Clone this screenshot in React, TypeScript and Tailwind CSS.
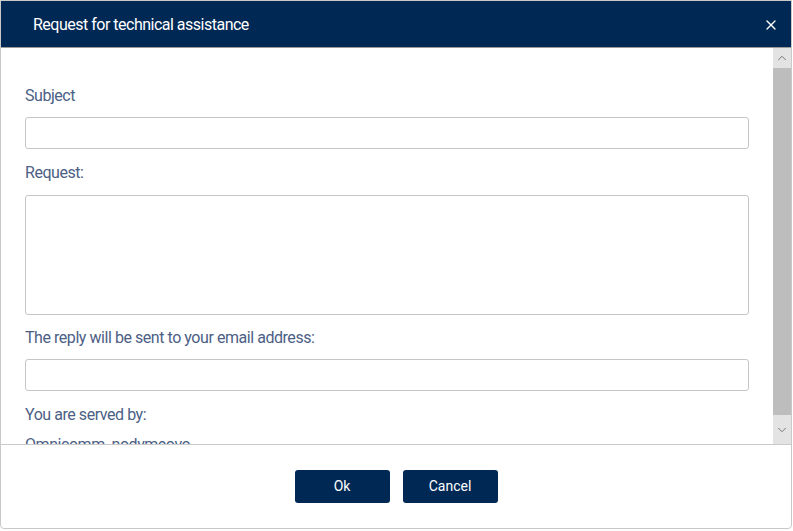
import { ChevronDown, ChevronUp, X } from 'lucide-react';

const font = { fontFamily: 'Roboto, "Liberation Sans", sans-serif' };

function Label({ children }: { children: React.ReactNode }) {
  return <div className="text-[16px] leading-[20px] tracking-[-0.45px] text-[#4c6085]">{children}</div>;
}

export default function App() {
  return (
    <div className="w-[793px] h-[531px] bg-white overflow-hidden" style={font}>
      <div className="w-[792px] h-[529px] flex flex-col border border-[#c9c9c9] rounded-b-[4px] overflow-hidden">
        {/* header */}
        <div className="h-[47px] shrink-0 bg-[#002855] border-b border-[#9a9a9a] flex items-center justify-between pl-[32px] pr-[12px] pt-[2px]">
          <span className="text-white text-[16px] tracking-[-0.5px]">Request for technical assistance</span>
          <X size={16} strokeWidth={2} className="text-white" />
        </div>

        {/* body */}
        <div className="flex h-[396px] shrink-0">
          <div className="flex-1 overflow-hidden pl-[24px] pr-[24px] pt-[38px]">
            <Label>Subject</Label>
            <input className="mt-[11px] w-full h-[32px] border border-[#c6c6c6] rounded-[3px] block" />
            <div className="mt-[14px]">
              <Label>Request:</Label>
            </div>
            <textarea className="mt-[12px] w-full h-[120px] border border-[#c6c6c6] rounded-[3px] block resize-none" />
            <div className="mt-[13px]">
              <Label>The reply will be sent to your email address:</Label>
            </div>
            <input className="mt-[11px] w-full h-[32px] border border-[#c6c6c6] rounded-[3px] block" />
            <div className="mt-[14px]">
              <Label>You are served by:</Label>
            </div>
            <div className="mt-[10px]">
              <Label>Omnicomm_nodymeovo</Label>
            </div>
          </div>
          {/* scrollbar */}
          <div className="w-[18px] shrink-0 flex flex-col bg-[#e3e3e3]">
            <div className="h-[20px] flex items-center justify-center">
              <ChevronUp size={14} strokeWidth={1.6} className="text-[#707070]" />
            </div>
            <div className="flex-1 bg-[#bdbdbd]" />
            <div className="h-[29px] flex items-center justify-center">
              <ChevronDown size={14} strokeWidth={1.6} className="text-[#707070]" />
            </div>
          </div>
        </div>

        {/* footer */}
        <div className="flex-1 border-t border-[#c9c9c9] flex items-start justify-center gap-[13px] pt-[25px]">
          <button className="w-[95px] h-[33px] rounded-[3px] bg-[#002855] text-white text-[14px]">Ok</button>
          <button className="w-[95px] h-[33px] rounded-[3px] bg-[#002855] text-white text-[14px]">Cancel</button>
        </div>
      </div>
    </div>
  );
}
